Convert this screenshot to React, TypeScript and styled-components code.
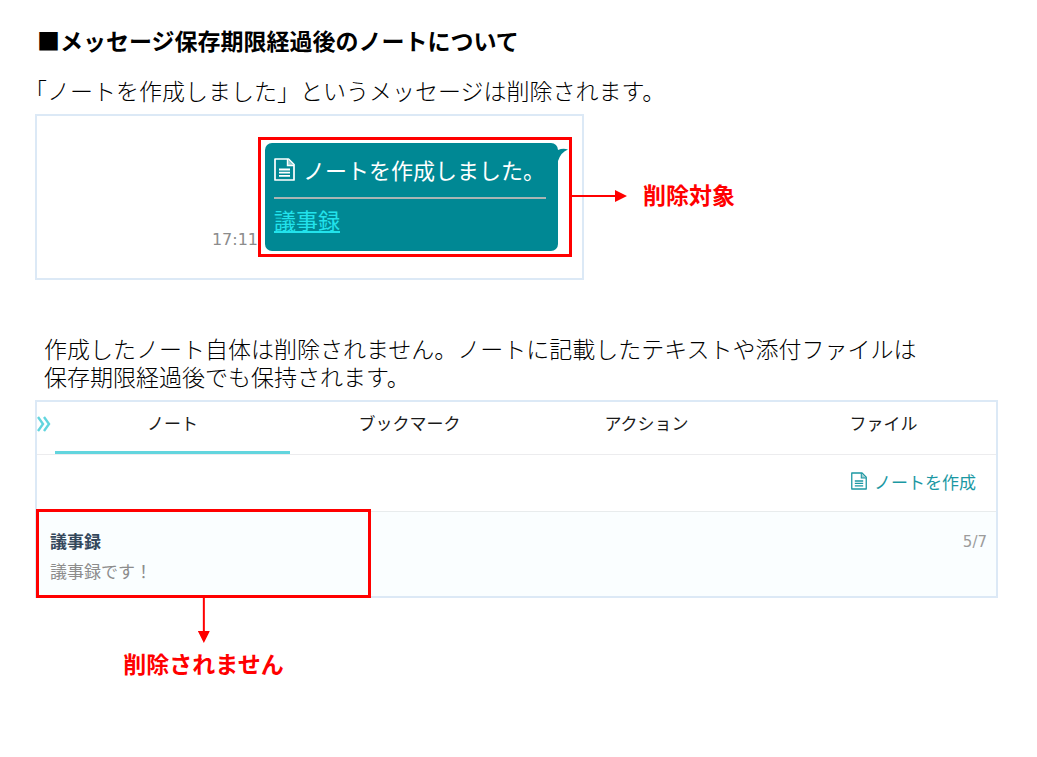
import React from "react";
import styled, { createGlobalStyle } from "styled-components";

const GlobalStyle = createGlobalStyle`
  *, *::before, *::after { box-sizing: border-box; }
  body {
    margin: 0;
    background: #fff;
    color: #000;
    font-family: "Noto Sans CJK JP", sans-serif;
  }
  button {
    border: 0;
    padding: 0;
    background: none;
    font: inherit;
    cursor: pointer;
  }
`;

const Page = styled.main`
  padding: 23px 39px 144px 35px;
`;

const Title = styled.h1`
  margin: 0 0 19px 2px;
  font-size: 23px;
  line-height: 34px;
  font-weight: 700;
`;

const Lead = styled.p<{ $indent: number }>`
  margin: 0 0 10px ${(p) => p.$indent}px;
  font-size: 23px;
  line-height: 28px;
  font-weight: 300;
`;

const Section = styled.section`
  margin-bottom: 54px;
`;

const Panel = styled.div`
  border: 2px solid #dce9f6;
`;

const ChatPanel = styled(Panel)`
  width: 549px;
  max-width: 100%;
  display: flex;
  justify-content: flex-end;
  align-items: flex-end;
  padding: 21px 10px;
`;

const Time = styled.time`
  margin-bottom: 7px;
  font-family: "DejaVu Sans", sans-serif;
  font-size: 16px;
  line-height: 20px;
  color: #8c8c8c;
`;

const TargetFrame = styled.div`
  position: relative;
  border: 3px solid #f00;
  padding: 3px 11px 3px 4px;
`;

const Bubble = styled.div`
  position: relative;
  width: 293px;
  padding: 8px 12px 16px 9px;
  border-radius: 7px;
  background: #008894;
  color: #fff;
  font-size: 22px;
`;

const BubbleTail = styled.svg`
  position: absolute;
  left: 100%;
  top: 4px;
  margin-left: -5px;
`;

const BubbleHead = styled.div`
  display: flex;
  align-items: center;
  gap: 8px;
  padding-bottom: 10px;
  border-bottom: 2px solid #a9b5b4;
  line-height: 36px;
  white-space: nowrap;
`;

const NoteLink = styled.a`
  display: inline-block;
  margin-top: 4px;
  line-height: 32px;
  color: #22e3ec;
  text-decoration-thickness: 2px;
  text-underline-offset: 2px;
`;

const SideCallout = styled.div`
  position: absolute;
  left: 100%;
  top: 50%;
  transform: translateY(-50%);
  display: flex;
  align-items: center;
  gap: 16px;
  margin: -1px 0 0 3px;
`;

const BottomCallout = styled.div`
  position: absolute;
  left: 50%;
  top: 100%;
  transform: translateX(-50%);
  display: flex;
  flex-direction: column;
  align-items: center;
  gap: 3px;
  margin-top: 3px;
`;

const CalloutText = styled.strong`
  padding-bottom: 4px;
  color: #f00;
  font-size: 23px;
  line-height: 34px;
  font-weight: 700;
  white-space: nowrap;
`;

const Header = styled.header`
  display: flex;
  height: 53px;
  border-bottom: 1px solid #ececee;
`;

const Collapse = styled.button`
  width: 18px;
  padding-bottom: 9px;
  display: flex;
  align-items: center;
`;

const TabsClip = styled.div`
  flex: 1;
  overflow: hidden;
`;

const Tabs = styled.nav`
  display: flex;
  gap: 2px;
  height: 100%;
  margin-right: -5px;
`;

const Tab = styled.button<{ $active?: boolean }>`
  flex: 1 1 0;
  padding-bottom: ${(p) => (p.$active ? 8 : 11)}px;
  border-bottom: ${(p) => (p.$active ? "3px solid #62d5de" : "0")};
  font-size: 17px;
  color: #1a1a1a;
`;

const Toolbar = styled.div`
  display: flex;
  justify-content: flex-end;
  height: 57px;
  padding: 0 20px 4px 0;
  border-bottom: 1px solid #e8eced;
`;

const CreateButton = styled.button`
  display: flex;
  align-items: center;
  gap: 7px;
  font-size: 17px;
  color: #1b98a3;
`;

const NoteRow = styled.article`
  position: relative;
  display: flex;
  justify-content: space-between;
  padding: 14px 9px 10px 13px;
  background: #fafeff;
  font-size: 17px;
  line-height: 30px;
`;

const NoteTitle = styled.h2`
  margin: 0;
  font-size: 17px;
  color: #33475b;
`;

const NoteBody = styled.p`
  margin: 0;
  color: #8c8c8c;
`;

const NoteDate = styled.time`
  font-family: "DejaVu Sans", sans-serif;
  font-size: 15px;
  line-height: 32px;
  color: #9c9c9c;
`;

const KeptFrame = styled.div`
  position: absolute;
  top: -3px;
  left: -1px;
  bottom: -2px;
  width: 335px;
  border: 3px solid #f00;
`;

function NoteIcon({ width, height, fill }: { width: number; height: number; fill: string }) {
  return (
    <svg width={width} height={height} viewBox="0 0 21 23" fill="none" stroke="currentColor" aria-hidden="true">
      <path d="M1 1h13.5L20 6.5V22H1z" strokeWidth="1.7" strokeLinejoin="round" />
      <path d="M13.5 1v6.5H20" strokeWidth="1.4" fill={fill} />
      <path d="M5 11.5h11M5 14.7h11M5 17.9h11" strokeWidth="1.8" />
    </svg>
  );
}

export default function App() {
  return (
    <>
      <GlobalStyle />
      <Page>
        <Title>■メッセージ保存期限経過後のノートについて</Title>

        <Section>
          <Lead $indent={-11}>「ノートを作成しました」というメッセージは削除されます。</Lead>
          <ChatPanel>
            <Time>17:11</Time>
            <TargetFrame>
              <Bubble>
                <BubbleTail width="15" height="15" viewBox="0 0 15 15" aria-hidden="true">
                  <path d="M0 0L5 3Q10 1 15 2.5Q8 5 5 14L0 14z" fill="#008894" />
                </BubbleTail>
                <BubbleHead>
                  <NoteIcon width={21} height={23} fill="#8fcdd1" />
                  <span>ノートを作成しました。</span>
                </BubbleHead>
                <NoteLink href="#note">議事録</NoteLink>
              </Bubble>
              <SideCallout>
                <svg width="55" height="12" viewBox="0 0 55 12" aria-hidden="true">
                  <path d="M0 5h43v2H0zM43 0l12 6-12 6z" fill="#f00" />
                </svg>
                <CalloutText>削除対象</CalloutText>
              </SideCallout>
            </TargetFrame>
          </ChatPanel>
        </Section>

        <section>
          <Lead $indent={9}>
            作成したノート自体は削除されません。ノートに記載したテキストや添付ファイルは
            <br />
            保存期限経過後でも保持されます。
          </Lead>
          <Panel>
            <Header>
              <Collapse aria-label="閉じる">
                <svg width="14" height="16" viewBox="0 0 14 16" fill="none" stroke="#62d5de" strokeWidth="2.4" aria-hidden="true">
                  <path d="M1 1l5 7-5 7M7 1l5 7-5 7" />
                </svg>
              </Collapse>
              <TabsClip>
                <Tabs>
                  <Tab $active>ノート</Tab>
                  <Tab>ブックマーク</Tab>
                  <Tab>アクション</Tab>
                  <Tab>ファイル</Tab>
                </Tabs>
              </TabsClip>
            </Header>
            <Toolbar>
              <CreateButton>
                <NoteIcon width={16} height={18} fill="#a5cfd3" />
                ノートを作成
              </CreateButton>
            </Toolbar>
            <NoteRow>
              <div>
                <NoteTitle>議事録</NoteTitle>
                <NoteBody>議事録です！</NoteBody>
              </div>
              <NoteDate>5/7</NoteDate>
              <KeptFrame>
                <BottomCallout>
                  <svg width="12" height="45" viewBox="0 0 12 45" aria-hidden="true">
                    <path d="M5 0h2v33H5zM0 33h12L6 45z" fill="#f00" />
                  </svg>
                  <CalloutText>削除されません</CalloutText>
                </BottomCallout>
              </KeptFrame>
            </NoteRow>
          </Panel>
        </section>
      </Page>
    </>
  );
}
